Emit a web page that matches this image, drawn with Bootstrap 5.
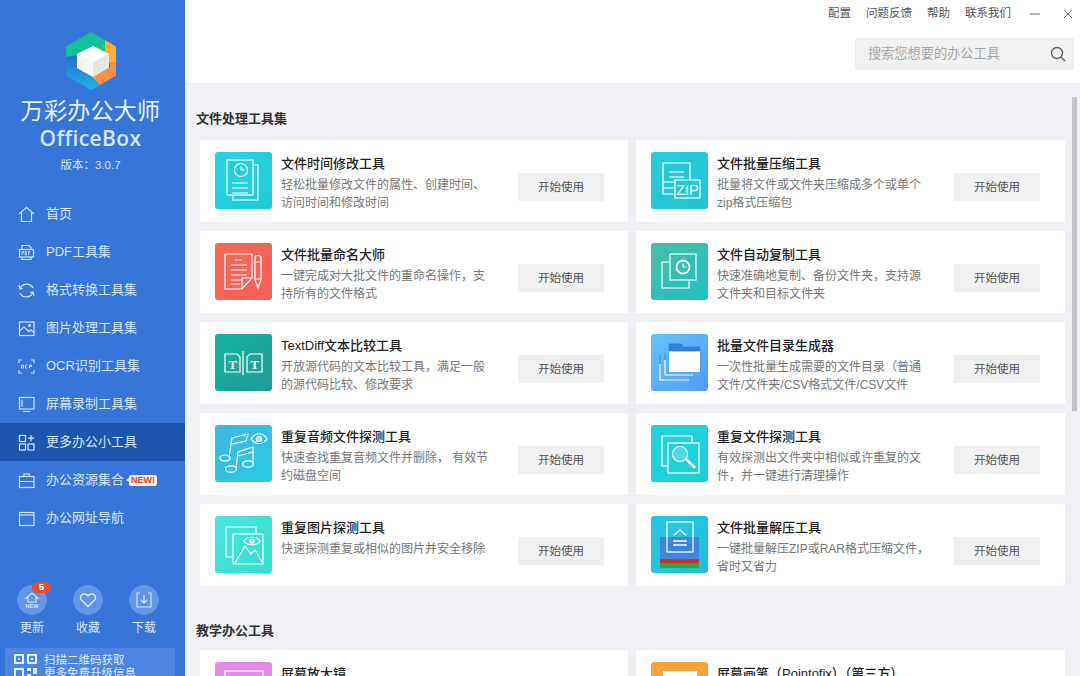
<!DOCTYPE html>
<html lang="zh-CN">
  <head>
    <meta charset="UTF-8" />
    <title>OfficeBox</title>
    <link href="https://cdn.jsdelivr.net/npm/bootstrap@5.3.3/dist/css/bootstrap.min.css" rel="stylesheet" />
    <style>
      html, body { height: 676px; overflow: hidden; }
      body { font-family: "Liberation Sans", "Noto Sans CJK SC", sans-serif; background: #f0f0f5; }
      .app-shell { width: 1080px; height: 676px; overflow: hidden; position: relative; }

      /* sidebar */
      .side-panel { width: 185px; height: 676px; background: #3776d9; color: #d9e9ff; }
      .side-logo { padding: 32px 4px 0 0; height: 195px; }
      .side-name { font-size: 23px; line-height: 28px; color: #e6f2ff; margin-top: 7px; letter-spacing: .3px; }
      .side-en { font-family: "Open Sans", sans-serif; font-size: 21px; line-height: 26px; font-weight: 600; color: #d3e8ff; letter-spacing: .4px; }
      .side-ver { font-size: 11.5px; line-height: 16px; color: #cfe2ff; margin-top: 6px; }
      .side-link { height: 38px; padding-left: 18px; font-size: 13px; gap: 11px; color: #d3e6ff; }
      .side-link svg { width: 17px; height: 17px; fill: none; stroke: #cfe4ff; stroke-width: 1.2; flex: none; }
      .side-link.on { background: #1d56ad; }
      .new-tag { font-size: 9px; font-weight: 700; line-height: 11px; background: #fbe9e4; color: #e2492f; padding: 0 2px; border-radius: 2px; margin-left: -6px; position: relative; font-family: "Liberation Sans", sans-serif; }
      .new-tag::before { content: ""; position: absolute; left: -3px; top: 3px; border-style: solid; border-width: 2.5px 3px 2.5px 0; border-color: transparent #fbe9e4 transparent transparent; }
      .side-quick { position: absolute; left: 0; top: 585px; width: 185px; padding-left: 4px; }
      .quick-item { width: 56px; font-size: 12px; line-height: 16px; color: #d3e6ff; text-align: center; position: relative; }
      .quick-dot { width: 30px; height: 30px; border-radius: 50%; background: #6094e6; margin: 0 auto 5px; }
      .quick-dot svg { width: 18px; height: 18px; fill: none; stroke: #d5e6ff; stroke-width: 1.2; }
      .quick-badge { position: absolute; left: 28px; top: -3px; width: 19px; height: 11px; border-radius: 6px; background: #ec4a32; color: #fff; font-size: 9px; line-height: 11px; font-weight: 700; }
      .qr-panel { position: absolute; left: 5px; top: 648px; width: 170px; height: 40px; background: #4c86de; padding: 6px 0 0 9px; gap: 6px; font-size: 11.5px; line-height: 13px; color: #d9e9ff; }

      /* top bar */
      .top-zone { height: 83px; background: #fff; }
      .top-links { height: 28px; padding-right: 7px; font-size: 11.5px; color: #555; gap: 15px; }
      .top-search { width: 219px; height: 32px; background: #f0f0f0; border-radius: 2px; margin: 10px 6px 0 auto; padding: 0 8px 0 13px; font-size: 13.2px; color: #a8a8a8; }

      /* content */
      .tool-scroll { height: 593px; padding: 0 15px; overflow: hidden; }
      .set-title { font-size: 13px; font-weight: 700; color: #333; line-height: 20px; margin-left: -4px; }
      .tool-grid { display: grid; grid-template-columns: 428px 429px; column-gap: 8px; row-gap: 9px; }
      .tool-item { height: 82px; background: #fff; padding: 12px 24px 0 15px; gap: 9px; }
      .tool-pic { width: 57px; height: 57px; border-radius: 3px; flex: none; }
      .tool-pic svg { width: 57px; height: 57px; display: block; fill: none; stroke: #fff; stroke-width: 1.2; }
      .tool-text { width: 212px; flex: none; }
      .tool-name { font-size: 13px; font-weight: 500; line-height: 18px; color: #222; margin-top: 3px; white-space: nowrap; }
      .tool-desc { font-size: 12px; line-height: 18px; color: #777; margin-top: 3px; }
      .tool-btn { width: 86px; height: 28px; background: #f0f0f0; border: 0; border-radius: 0; font-size: 11.5px; color: #555; padding: 1px 0 0; margin: 21px 0 0 16px; flex: none; }
      .scroll-thumb { position: absolute; left: 1072px; top: 97px; width: 5px; height: 314px; background: #c4c4c8; }
    </style>
  </head>
  <body>
    <div class="app-shell d-flex">
      <!-- Sidebar -->
      <aside class="side-panel flex-shrink-0">
        <div class="side-logo text-center">
          <svg width="52" height="58" viewBox="0 0 52 58" class="d-block mx-auto">
            <defs><linearGradient id="logoBlue" x1="0" y1="0" x2="0" y2="1"><stop offset="0" stop-color="#2a6ccf" /><stop offset="1" stop-color="#1fb4e2" /></linearGradient></defs>
            <path d="M26 0 L40 8 L40 22 L12 24 L1 25 L1 14.5 Z" fill="#12c09a" />
            <path d="M40 8 L51 14.5 L51 31 L40 31 Z" fill="#ffb02e" />
            <path d="M51 30 L51 43.5 L35 53 L27 45 L45 36 L45 30 Z" fill="#ff8f45" />
            <path d="M1 25 L12 23 L12 37 L27 45 L35 53 L26 58 L1 43.5 Z" fill="url(#logoBlue)" />
            <path d="M28 14 L44 22 L44 36 L28 45 L12 36 L12 22 Z" fill="#e6e6e6" />
            <path d="M28 14 L44 22 L28 30 L12 22 Z" fill="#fff" />
            <path d="M12 22 L28 30 L28 45 L12 36 Z" fill="#f6f6f6" />
          </svg>
          <div class="side-name">万彩办公大师</div>
          <div class="side-en">OfficeBox</div>
          <div class="side-ver">版本：3.0.7</div>
        </div>
        <nav>
          <a class="side-link d-flex align-items-center text-decoration-none"><svg viewBox="0 0 17 17"><path d="M1 8 L8.5 1.5 L16 8 M3.5 6.5 V15.5 H13.5 V6.5" /></svg>首页</a>
          <a class="side-link d-flex align-items-center text-decoration-none"><svg viewBox="0 0 17 17"><path d="M4 5 V1.5 H11 L13 3.5 V5 M4 13 V15.5 H13 V13" /><rect x="1.5" y="5.5" width="14" height="7.5" /><path d="M4 11 V7.5 H5.5 V9 H4 M7 7.5 V11 H8.5 V7.5 H7 M10.5 11 V7.5 H12.5 M10.5 9 H12" stroke-width=".8" /></svg>PDF工具集</a>
          <a class="side-link d-flex align-items-center text-decoration-none"><svg viewBox="0 0 17 17"><path d="M2 7 A7 7 0 0 1 15 6 M15 10 A7 7 0 0 1 2 11 M1 3 L2 7 L5 6.5 M16 14 L15 10 L12 10.5" /></svg>格式转换工具集</a>
          <a class="side-link d-flex align-items-center text-decoration-none"><svg viewBox="0 0 17 17"><rect x="1.5" y="2" width="14.5" height="13.5" /><path d="M1.5 11 L6 7 L11 11.5 L13 10 L16 12.5" /><circle cx="11.5" cy="5.5" r="1" /></svg>图片处理工具集</a>
          <a class="side-link d-flex align-items-center text-decoration-none"><svg viewBox="0 0 17 17"><path d="M1 5 V2 H4 M13 2 H16 V5 M16 12 V15 H13 M4 15 H1 V12" /><path d="M3.5 7 H5.5 V10 H3.5 Z M7.5 7 H9.5 M7.5 7 V10 H9.5 M11.5 10 V7 H13.5 V8.5 H11.5" stroke-width=".9" /></svg>OCR识别工具集</a>
          <a class="side-link d-flex align-items-center text-decoration-none"><svg viewBox="0 0 17 17"><rect x="1.5" y="1.5" width="14.5" height="11.5" /><path d="M5 15.5 H12.5 M4 3.5 V11" /></svg>屏幕录制工具集</a>
          <a class="side-link on d-flex align-items-center text-decoration-none"><svg viewBox="0 0 17 17"><rect x="1.5" y="1.5" width="6" height="6" /><rect x="1.5" y="10" width="6" height="6" /><rect x="10" y="10" width="6" height="6" /><path d="M13 1 V7.5 M10 4.2 H16" /></svg>更多办公小工具</a>
          <a class="side-link d-flex align-items-center text-decoration-none"><svg viewBox="0 0 17 17"><rect x="1.5" y="4.5" width="14.5" height="11" /><path d="M6 4.5 V2 H11.5 V4.5 M1.5 9.5 H16" /></svg>办公资源集合<span class="new-tag">NEW!</span></a>
          <a class="side-link d-flex align-items-center text-decoration-none"><svg viewBox="0 0 17 17"><rect x="1.5" y="2.5" width="14.5" height="13" /><path d="M1.5 5 H16" /></svg>办公网址导航</a>
        </nav>
        <div class="side-quick d-flex">
          <div class="quick-item">
            <div class="quick-dot d-flex align-items-center justify-content-center"><svg viewBox="0 0 18 18"><path d="M2 8 L9 2 L16 8 M5 6 V11 H13 V6" /><text x="9" y="16.5" text-anchor="middle" font-size="5.5" font-weight="700" font-family="Liberation Sans" fill="#d5e6ff" stroke="none">NEW</text></svg></div>
            <span class="quick-badge">5</span>更新
          </div>
          <div class="quick-item">
            <div class="quick-dot d-flex align-items-center justify-content-center"><svg viewBox="0 0 18 18"><path d="M9 15.5 L2.5 9 C0 5.5 3 2.5 6 3 C7.5 3.2 8.5 4 9 5 C9.5 4 10.5 3.2 12 3 C15 2.5 18 5.5 15.5 9 Z" stroke-width="1.4" /></svg></div>
            收藏
          </div>
          <div class="quick-item">
            <div class="quick-dot d-flex align-items-center justify-content-center"><svg viewBox="0 0 18 18"><path d="M5 2 H2 V16 H16 V2 H13 M9 4 V12 M6 9 L9 12 L12 9" /></svg></div>
            下载
          </div>
        </div>
        <div class="qr-panel d-flex">
          <svg width="24" height="30" viewBox="0 0 24 30" class="flex-shrink-0">
            <g fill="none" stroke="#e2eeff" stroke-width="2"><rect x="1" y="1" width="8" height="8" /><rect x="14" y="1" width="8" height="8" /><rect x="1" y="15" width="8" height="8" /></g>
            <path d="M4 4 H6 V6 H4 Z M17 4 H19 V6 H17 Z M13 14 H17 V17 H13 Z M19 14 H23 V20 H19 Z M13 20 H17 V24 H13 Z M19 22 H23 V25 H19 Z" fill="#e2eeff" />
          </svg>
          <div>扫描二维码获取<br />更多免费升级信息</div>
        </div>
      </aside>

      <!-- Main -->
      <main class="flex-grow-1">
        <div class="top-zone">
          <div class="top-links d-flex align-items-center justify-content-end">
            <span>配置</span><span>问题反馈</span><span>帮助</span><span>联系我们</span>
            <svg width="10" height="10" viewBox="0 0 10 10" class="ms-1"><path d="M0 5 H10" stroke="#666" /></svg>
            <svg width="10" height="10" viewBox="0 0 10 10" class="ms-2"><path d="M1 1 L9 9 M9 1 L1 9" stroke="#777" /></svg>
          </div>
          <div class="top-search d-flex align-items-center justify-content-between">
            <span>搜索您想要的办公工具</span>
            <svg width="16" height="16" viewBox="0 0 16 16" fill="none" stroke="#666" stroke-width="1.4"><circle cx="7" cy="7" r="5.5" /><path d="M11 11 L15 15" /></svg>
          </div>
        </div>

        <div class="tool-scroll">
          <div class="set-title" style="padding-top:26px;height:57px">文件处理工具集</div>
          <div class="tool-grid">
            <div class="tool-item d-flex">
              <div class="tool-pic" style="background:linear-gradient(135deg,#2bd3e4,#1ccbd8)"><svg viewBox="0 0 57 57"><path d="M38 13 H43 V48 H18 V43" /><rect x="12" y="8" width="26" height="35" fill="#24cfdf" /><circle cx="26" cy="18" r="6.5" /><path d="M26 14.5 V18 H29.5 M17 31 H33 M17 36 H33 M17 41 H33" /></svg></div>
              <div class="tool-text"><div class="tool-name">文件时间修改工具</div><div class="tool-desc">轻松批量修改文件的属性、创建时间、访问时间和修改时间</div></div>
              <button class="btn tool-btn">开始使用</button>
            </div>
            <div class="tool-item d-flex">
              <div class="tool-pic" style="background:linear-gradient(135deg,#2bcbdc,#20c5d0)"><svg viewBox="0 0 57 57"><path d="M24 42 H12 V11 H39 V28" /><path d="M18 20 H33 M18 25 H33 M12 30 H24 M12 36 H24" /><rect x="24" y="28" width="25" height="18" fill="#25c8d6" /><text x="36.5" y="43" text-anchor="middle" font-size="14.5" font-family="Liberation Sans" fill="#fff" stroke="none">ZIP</text></svg></div>
              <div class="tool-text"><div class="tool-name">文件批量压缩工具</div><div class="tool-desc">批量将文件或文件夹压缩成多个或单个zip格式压缩包</div></div>
              <button class="btn tool-btn">开始使用</button>
            </div>
            <div class="tool-item d-flex">
              <div class="tool-pic" style="background:linear-gradient(135deg,#ef6c52,#fb5d5a)"><svg viewBox="0 0 57 57" stroke-width="1.4"><path d="M27 46 H10 V11 H37 V35 Z M27 46 V35 H37" /><path d="M20 17 H27 M16 22 H32 M16 27 H32 M16 32 H32 M16 37 H27 M16 41 H25" /><path d="M40 16 C40 11 46 11 46 16 V37 L43 45 L40 37 Z M40 19 H46 M40 36 H46" /></svg></div>
              <div class="tool-text"><div class="tool-name">文件批量命名大师</div><div class="tool-desc">一键完成对大批文件的重命名操作，支持所有的文件格式</div></div>
              <button class="btn tool-btn">开始使用</button>
            </div>
            <div class="tool-item d-flex">
              <div class="tool-pic" style="background:linear-gradient(135deg,#48bfa6,#20bfc3)"><svg viewBox="0 0 57 57" stroke-width="1.4"><path d="M19 19 H11 V45 H38 V37" /><rect x="19" y="11" width="26" height="26" /><circle cx="32" cy="24" r="6.5" stroke-width="1.8" /><path d="M32 20.5 V24 H35.5" /></svg></div>
              <div class="tool-text"><div class="tool-name">文件自动复制工具</div><div class="tool-desc">快速准确地复制、备份文件夹，支持源文件夹和目标文件夹</div></div>
              <button class="btn tool-btn">开始使用</button>
            </div>
            <div class="tool-item d-flex">
              <div class="tool-pic" style="background:linear-gradient(135deg,#15b3a3,#209a96)"><svg viewBox="0 0 57 57" stroke-width="1.3"><path d="M10 20 H22 L25 23 V38 H10 Z M28 17 V41 M32 23 L35 20 H47 V38 H32 Z" /><text x="17.5" y="35" text-anchor="middle" font-size="13" font-family="Liberation Serif" font-weight="700" fill="#fff" stroke="none">T</text><text x="39.5" y="35" text-anchor="middle" font-size="13" font-family="Liberation Serif" font-weight="700" fill="#fff" stroke="none">T</text></svg></div>
              <div class="tool-text"><div class="tool-name">TextDiff文本比较工具</div><div class="tool-desc">开放源代码的文本比较工具，满足一般的源代码比较、修改要求</div></div>
              <button class="btn tool-btn">开始使用</button>
            </div>
            <div class="tool-item d-flex">
              <div class="tool-pic" style="background:linear-gradient(135deg,#68c3fb,#4e9bf8)"><svg viewBox="0 0 57 57" stroke-width="1.8"><path d="M9 30 V46 H38 M14 26 V41 H42" /><rect x="18" y="14" width="31" height="24" fill="#fff" stroke="none" /><path d="M18 10 H30 L32 13 H49 V17 H18 Z M9 21 V30 M14 19 V26" fill="#2f82d8" stroke="#2f82d8" stroke-width=".8" /></svg></div>
              <div class="tool-text"><div class="tool-name">批量文件目录生成器</div><div class="tool-desc">一次性批量生成需要的文件目录（普通文件/文件夹/CSV格式文件/CSV文件</div></div>
              <button class="btn tool-btn">开始使用</button>
            </div>
            <div class="tool-item d-flex">
              <div class="tool-pic" style="background:linear-gradient(135deg,#3eb6e2,#2ccbe4)"><svg viewBox="0 0 57 57"><ellipse cx="10" cy="33" rx="5" ry="3" /><ellipse cx="16" cy="44" rx="5.5" ry="3.2" /><ellipse cx="33" cy="39" rx="5.5" ry="3.2" /><path d="M14 32 L17 13 L33 9 L31 16 L17 19 M21 43 L23 27 L38 22 V38 M23 31 L38 27" /><path d="M36 14 C40 7 48 7 52 14 C48 20 40 20 36 14 Z" /><circle cx="44" cy="14" r="2.5" fill="#fff" fill-opacity=".5" /></svg></div>
              <div class="tool-text"><div class="tool-name">重复音频文件探测工具</div><div class="tool-desc">快速查找重复音频文件并删除， 有效节约磁盘空间</div></div>
              <button class="btn tool-btn">开始使用</button>
            </div>
            <div class="tool-item d-flex">
              <div class="tool-pic" style="background:linear-gradient(135deg,#24d3dd,#1fcfd6)"><svg viewBox="0 0 57 57" stroke-width="1.4"><path d="M17 41 H11 V11 H41 V18" /><rect x="17" y="18" width="31" height="30" /><circle cx="29" cy="29" r="7.5" fill="#6fe0ea" fill-opacity=".6" /><path d="M35 34 L44 43" stroke-width="2.6" /></svg></div>
              <div class="tool-text"><div class="tool-name">重复文件探测工具</div><div class="tool-desc">有效探测出文件夹中相似或许重复的文件，并一键进行清理操作</div></div>
              <button class="btn tool-btn">开始使用</button>
            </div>
            <div class="tool-item d-flex">
              <div class="tool-pic" style="background:linear-gradient(135deg,#4fe1e2,#2ee2cc)"><svg viewBox="0 0 57 57" stroke-width="1.4"><path d="M18 41 H11 V11 H41 V18" /><rect x="18" y="18" width="30" height="30" /><path d="M20 47 L30 30 L36 38 L40 34 L47 46" /><path d="M29 25 C32 20 42 20 45 25 C42 30 32 30 29 25 Z" /><circle cx="37" cy="25" r="2" fill="#fff" fill-opacity=".5" /></svg></div>
              <div class="tool-text"><div class="tool-name">重复图片探测工具</div><div class="tool-desc">快速探测重复或相似的图片并安全移除</div></div>
              <button class="btn tool-btn">开始使用</button>
            </div>
            <div class="tool-item d-flex">
              <div class="tool-pic" style="background:linear-gradient(135deg,#2cc6e2,#21bdd8)"><svg viewBox="0 0 57 57"><rect x="9" y="21" width="39" height="22" fill="#3f86dd" stroke="none" /><rect x="9" y="43" width="39" height="4" fill="#c9302f" stroke="none" /><rect x="9" y="47" width="39" height="5" fill="#27a83f" stroke="none" /><rect x="16" y="6" width="26" height="30" /><path d="M23 19 L29 14 L35 19 M22 25 H36 M22 29 H36" stroke-width="1.6" /></svg></div>
              <div class="tool-text"><div class="tool-name">文件批量解压工具</div><div class="tool-desc">一键批量解压ZIP或RAR格式压缩文件，省时又省力</div></div>
              <button class="btn tool-btn">开始使用</button>
            </div>
          </div>

          <div class="set-title" style="padding-top:35px;height:64px">教学办公工具</div>
          <div class="tool-grid">
            <div class="tool-item d-flex">
              <div class="tool-pic" style="background:#e38ae8"><svg viewBox="0 0 57 57"><rect x="10" y="9" width="38" height="26" /></svg></div>
              <div class="tool-text"><div class="tool-name">屏幕放大镜</div></div>
            </div>
            <div class="tool-item d-flex">
              <div class="tool-pic" style="background:#ffa235"><svg viewBox="0 0 57 57"><rect x="12" y="9" width="34" height="26" fill="#fff" stroke="none" /></svg></div>
              <div class="tool-text"><div class="tool-name">屏幕画笔（Pointofix）（第三方）</div></div>
            </div>
          </div>
        </div>
      </main>
      <div class="scroll-thumb"></div>
    </div>
    <script src="https://cdn.jsdelivr.net/npm/bootstrap@5.3.3/dist/js/bootstrap.bundle.min.js"></script>
  </body>
</html>
